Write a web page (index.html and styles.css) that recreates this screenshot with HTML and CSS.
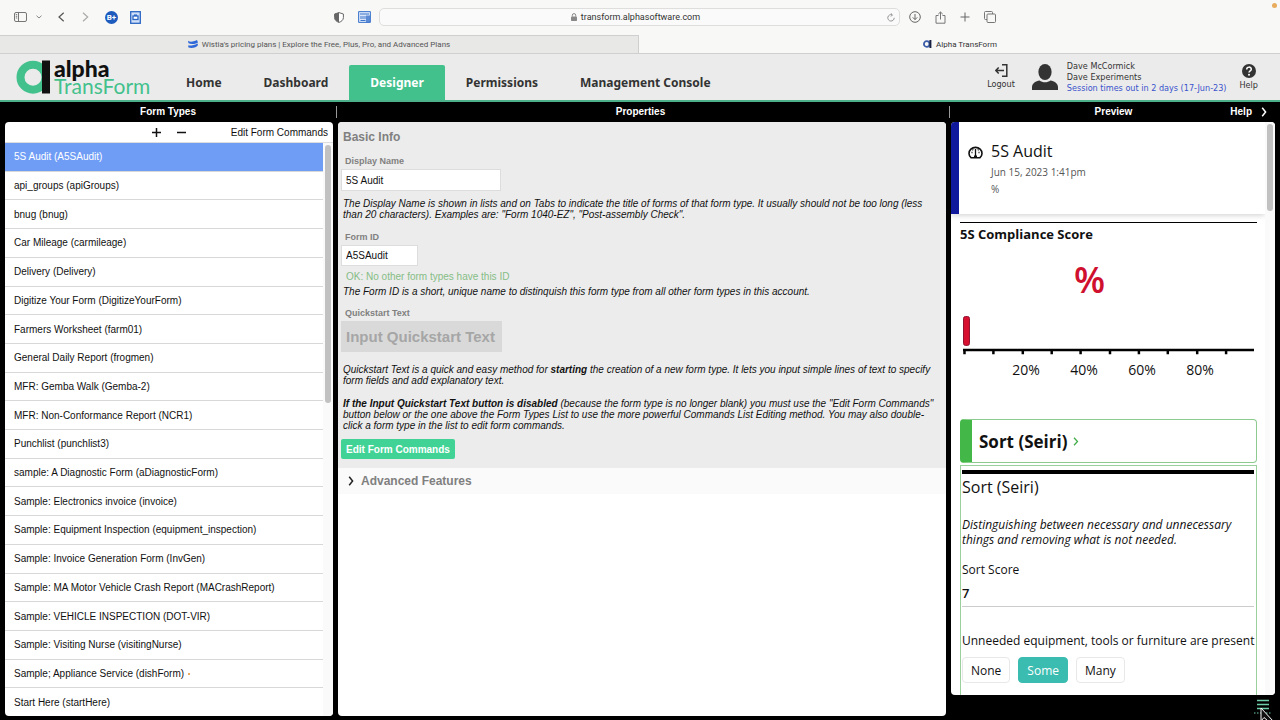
FILE: index.html
```html
<!DOCTYPE html>
<html lang="en">
<head>
<meta charset="utf-8">
<title>Alpha TransForm</title>
<link rel="stylesheet" href="styles.css">
</head>
<body>
<div class="browser-bar">
  <div class="bar-left">
    <button class="icon-btn" aria-label="Sidebar"><svg width="13" height="10" viewBox="0 0 13 10" fill="none" stroke="#777"><rect x=".5" y=".5" width="12" height="9" rx="1.5"/><path d="M4.5 .5v9M1.8 2.6h1.4M1.8 4.3h1.4M1.8 6h1.4"/></svg></button>
    <button class="icon-btn caret" aria-label="Tab groups"><svg width="6" height="4" viewBox="0 0 6 4" fill="none" stroke="#888"><path d="M.5 .7 3 3 5.500 .7"/></svg></button>
    <button class="icon-btn back" aria-label="Back"><svg width="7" height="10" viewBox="0 0 7 10" fill="none" stroke="#555" stroke-width="1.200"><path d="M5.700 .7 1 5l4.700 4.300"/></svg></button>
    <button class="icon-btn forward" aria-label="Forward"><svg width="7" height="10" viewBox="0 0 7 10" fill="none" stroke="#aaa" stroke-width="1.200"><path d="M1 .7 5.700 5 1 9.300"/></svg></button>
    <button class="icon-btn badge" aria-label="B plus">B+</button>
    <button class="icon-btn" aria-label="Capture"><svg width="11" height="13" viewBox="0 0 11 13" fill="none" stroke="#2b66c4"><rect x=".7" y=".7" width="9.600" height="11.600" fill="#cfe0f8" stroke-width="1.300"/><rect x="3" y="5" width="5" height="3.500" fill="#fff" stroke-width="1.300"/><path d="M4 4.200h3" stroke-width="1.500"/></svg></button>
  </div>
  <div class="bar-mid">
    <svg width="10" height="11" viewBox="0 0 10 11"><path d="M5 .6 9.400 2v3.600C9.400 8 7.500 9.500 5 10.400 2.500 9.500.6 8 .6 5.600V2z" fill="#fff" stroke="#666"/><path d="M5 .6v9.800C2.500 9.500.6 8 .6 5.600V2z" fill="#666"/></svg>
    <svg class="reader" width="13" height="12" viewBox="0 0 13 12" fill="none" stroke="#3d74cc"><path d="M.6 .6h11.800v10.800H.6z" fill="#d9e6f9"/><path d="M2 3h9M2.500 9.500h5M3 5v3M5 5v3M7 5v3" /><path d="M9 4.500v7M11 4.500v7" stroke-width="1.600"/></svg>
    <div class="address">
      <span class="address-text"><svg width="6" height="8" viewBox="0 0 6 8"><rect y="3.400" width="6" height="4.600" rx=".8" fill="#888"/><path d="M1.300 3.600V2.300a1.700 1.700 0 0 1 3.400 0v1.300" fill="none" stroke="#888"/></svg>transform.alphasoftware.com</span>
      <button class="icon-btn" aria-label="Reload"><svg width="8" height="9" viewBox="0 0 8 9" fill="none" stroke="#888" stroke-width=".9"><path d="M5 1.800a3.200 3.200 0 1 0 2.200 3M3.800 .3 5.500 1.900 3.900 3.500"/></svg></button>
    </div>
  </div>
  <div class="bar-right">
    <button class="icon-btn" aria-label="Downloads"><svg width="12" height="12" viewBox="0 0 12 12" fill="none" stroke="#666"><circle cx="6" cy="6" r="5.300"/><path d="M6 3v5.500M3.800 6.400 6 8.600l2.200-2.200"/></svg></button>
    <button class="icon-btn" aria-label="Share"><svg width="11" height="13" viewBox="0 0 11 13" fill="none" stroke="#777"><path d="M3.500 4.500H1v7.700h9V4.500H7.500M5.500 8.500V1M3.200 3.200 5.500 1l2.300 2.200"/></svg></button>
    <button class="icon-btn" aria-label="New tab"><svg width="10" height="10" viewBox="0 0 10 10" stroke="#666"><path d="M5 .5v9M.5 5h9"/></svg></button>
    <button class="icon-btn" aria-label="Tab overview"><svg width="12" height="12" viewBox="0 0 12 12" fill="none" stroke="#777"><path d="M3 8.500H1.500a1 1 0 0 1-1-1v-6a1 1 0 0 1 1-1h6a1 1 0 0 1 1 1V3"/><rect x="3" y="3" width="8.500" height="8.500" rx="1"/></svg></button>
  </div>
  <span class="record-dot"></span>
</div>
<div class="tabs">
  <a class="tab" href="#"><svg width="10" height="8" viewBox="0 0 10 8" fill="#2f68d8"><path d="M0 .8c2.500 1.600 5 1 9-.8L10 2.500C7 4.300 3 4.500 .5 3.300zM0 5.400c3 .6 6-.2 9.500-2L10 5c-1 2.500-6 3.500-9.500 2.600z"/></svg>Wistia's pricing plans | Explore the Free, Plus, Pro, and Advanced Plans</a>
  <a class="tab active" href="#"><svg width="9" height="8" viewBox="0 0 9 8"><circle cx="3.700" cy="4" r="2.800" fill="none" stroke="#3a5ca8" stroke-width="1.800"/><path d="M6.400 0h2v8h-2z" fill="#182142"/></svg>Alpha TransForm</a>
</div>
<header class="app-header">
  <a class="logo" href="#">
    <svg width="35" height="35" viewBox="0 0 35 35"><circle cx="17" cy="17.200" r="12.500" fill="none" stroke="#43c18d" stroke-width="8"/><path d="M26 .5h8v33h-8z" fill="#111"/></svg>
    <span class="logo-text"><span class="logo-alpha">alpha</span><span class="logo-transform">TransForm</span></span>
  </a>
  <nav class="nav">
    <a href="#">Home</a><a href="#">Dashboard</a><a href="#" class="current">Designer</a><a href="#">Permissions</a><a href="#">Management Console</a>
  </nav>
  <div class="account">
    <a class="action" href="#"><svg width="13" height="13" viewBox="0 0 13 13" fill="none" stroke="#333" stroke-width="1.500"><path d="M7 .8h4.800v11.400H7M.8 6.500H9M3.700 3.500l-2.900 3 2.900 3"/></svg>Logout</a>
    <svg width="26" height="26" viewBox="0 0 26 26" fill="#333"><ellipse cx="13" cy="8" rx="6.600" ry="8"/><path d="M0 26v-3c0-4 4-6 7.500-6.600 3 2.400 8 2.400 11 0C22 17 26 19 26 23v3z"/></svg>
    <div class="user"><span>Dave McCormick</span><span>Dave Experiments</span><a href="#">Session times out in 2 days (17-Jun-23)</a></div>
    <a class="action help" href="#"><svg width="14" height="14" viewBox="0 0 14 14"><circle cx="7" cy="7" r="7" fill="#333"/><path d="M4.700 5.400C4.700 2.400 9.300 2.400 9.300 5.200 9.300 6.800 7 6.900 7 8.600" fill="none" stroke="#fff" stroke-width="1.500"/><circle cx="7" cy="10.800" r="1" fill="#fff"/></svg>Help</a>
  </div>
</header>
<main class="workspace">
  <div class="titles">
    <h2>Form Types</h2>
    <h2 class="title-mid">Properties</h2>
    <div class="title-preview"><h2>Preview</h2><a href="#">Help<svg width="6" height="10" viewBox="0 0 6 10" fill="none" stroke="#fff" stroke-width="1.500"><path d="M1.200 .8 4.600 5 1.200 9.200"/></svg></a></div>
  </div>
  <div class="columns">
    <section class="panel forms">
      <div class="forms-tools">
        <button aria-label="Add"><svg width="9" height="9" viewBox="0 0 9 9" stroke="#111" stroke-width="1.500"><path d="M4.500 0v9M0 4.500h9"/></svg></button>
        <button aria-label="Remove"><svg width="9" height="9" viewBox="0 0 9 9" stroke="#111" stroke-width="1.500"><path d="M0 4.500h9"/></svg></button>
        <button class="edit-link">Edit Form Commands</button>
      </div>
      <div class="forms-body">
        <ul class="form-list">
          <li class="selected">5S Audit (A5SAudit)</li>
          <li>api_groups (apiGroups)</li>
          <li>bnug (bnug)</li>
          <li>Car Mileage (carmileage)</li>
          <li>Delivery (Delivery)</li>
          <li>Digitize Your Form (DigitizeYourForm)</li>
          <li>Farmers Worksheet (farm01)</li>
          <li>General Daily Report (frogmen)</li>
          <li>MFR: Gemba Walk (Gemba-2)</li>
          <li>MFR: Non-Conformance Report (NCR1)</li>
          <li>Punchlist (punchlist3)</li>
          <li>sample: A Diagnostic Form (aDiagnosticForm)</li>
          <li>Sample: Electronics invoice (invoice)</li>
          <li>Sample: Equipment Inspection (equipment_inspection)</li>
          <li>Sample: Invoice Generation Form (InvGen)</li>
          <li>Sample: MA Motor Vehicle Crash Report (MACrashReport)</li>
          <li>Sample: VEHICLE INSPECTION (DOT-VIR)</li>
          <li>Sample: Visiting Nurse (visitingNurse)</li>
          <li>Sample; Appliance Service (dishForm)<span class="dot"></span></li>
          <li>Start Here (startHere)</li>
        </ul>
        <div class="scroll"><div class="thumb thumb-forms"></div></div>
      </div>
    </section>
    <section class="panel properties">
      <div class="basic">
        <h3>Basic Info</h3>
        <label for="display-name">Display Name</label>
        <input id="display-name" type="text" value="5S Audit">
        <p class="name-help">The Display Name is shown in lists and on Tabs to indicate the title of forms of that form type. It usually should not be too long (less than 20 characters). Examples are: "Form 1040-EZ", "Post-assembly Check".</p>
        <label for="form-id">Form ID</label>
        <input id="form-id" class="short" type="text" value="A5SAudit">
        <div class="ok">OK: No other form types have this ID</div>
        <p class="id-help">The Form ID is a short, unique name to distinquish this form type from all other form types in this account.</p>
        <label for="quickstart">Quickstart Text</label>
        <button id="quickstart" class="quickstart" disabled>Input Quickstart Text</button>
        <p class="quick-help">Quickstart Text is a quick and easy method for <b>starting</b> the creation of a new form type. It lets you input simple lines of text to specify form fields and add explanatory text.</p>
        <p class="disabled-help"><b>If the Input Quickstart Text button is disabled</b> (because the form type is no longer blank) you must use the "Edit Form Commands" button below or the one above the Form Types List to use the more powerful Commands List Editing method. You may also double-click a form type in the list to edit form commands.</p>
        <button class="edit-commands">Edit Form Commands</button>
      </div>
      <button class="advanced"><svg width="6" height="10" viewBox="0 0 6 10" fill="none" stroke="#222" stroke-width="1.500"><path d="M1.200 .8 4.600 5 1.200 9.200"/></svg>Advanced Features</button>
    </section>
    <div class="preview-col">
      <section class="panel preview">
        <div class="preview-main">
          <div class="form-card">
            <svg width="15" height="14" viewBox="0 0 15 14" fill="none" stroke="#111"><path d="M3 12.700a6.500 6 0 1 1 9 0z" stroke-width="1.600"/><path d="M7.500 4v7M3.500 7.500h1M10.500 7.500h1M4.500 4.500l.7.700M10.500 4.500l-.7.700" stroke-width="1.300"/><path d="M6 10.500h3v2H6z" fill="#111" stroke="none"/></svg>
            <div><h3>5S Audit</h3><div class="meta">Jun 15, 2023 1:41pm</div><div class="meta">%</div></div>
          </div>
          <div class="form-body">
            <h4 class="score-title">5S Compliance Score</h4>
            <div class="score">%</div>
            <svg class="gauge" width="100%" height="40" viewBox="0 0 292 40" preserveAspectRatio="xMinYMin meet"><rect x=".5" y=".5" width="6" height="29" rx="2" fill="#d8102f" stroke="#8f1230"/><path d="M0 34h292M1.500 34v4.500M30.500 34v4.500M60 34v4.500M89 34v4.500M118 34v4.500M147.500 34v4.500M176.500 34v4.500M205.500 34v4.500M235 34v4.500M264 34v4.500" stroke="#000" stroke-width="2.500"/></svg>
            <div class="gauge-labels"><span>20%</span><span>40%</span><span>60%</span><span>80%</span></div>
            <button class="section-btn">Sort (Seiri)<svg width="6" height="9" viewBox="0 0 6 9" fill="none" stroke="#44ae4b" stroke-width="1.300"><path d="M1 .7 4.500 4.500 1 8.300"/></svg></button>
            <div class="section">
              <h3>Sort (Seiri)</h3>
              <p class="desc">Distinguishing between necessary and unnecessary things and removing what is not needed.</p>
              <div class="field-label">Sort Score</div>
              <div class="field-value">7</div>
              <div class="field-label question">Unneeded equipment, tools or furniture are present</div>
              <div class="choices"><button>None</button><button class="chosen">Some</button><button>Many</button></div>
            </div>
          </div>
        </div>
        <div class="scroll"><div class="thumb thumb-preview"></div></div>
      </section>
      <div class="footer"><button class="menu" aria-label="Menu"><svg width="18" height="20" viewBox="0 0 18 20"><path d="M3 5.500h12M3 9.500h12M3 13.500h12" stroke="#6fcfaa" stroke-width="1.500"/><path d="M0 18h18" stroke="#6fcfaa" stroke-dasharray="1.500 1.500"/></svg><svg class="pointer" width="13" height="14" viewBox="0 0 13 14"><path d="M1 1v13L4 10.500 8 14h5z" fill="#111" stroke="#fff"/></svg></button></div>
    </div>
  </div>
</main>
</body>
</html>
```

FILE: styles.css
```css
* { box-sizing: border-box; }
body { margin: 0; height: 100vh; display: flex; flex-direction: column; overflow: hidden; font-family: "Liberation Sans", Arial, sans-serif; font-size: 10px; color: #111; background: #000; }
button { font: inherit; color: inherit; background: none; border: 0; padding: 0; margin: 0; }
a { color: inherit; text-decoration: none; }
h2, h3, h4, p, ul { margin: 0; padding: 0; }
svg { display: block; flex: none; }

.browser-bar { position: relative; flex: none; height: 35px; display: flex; align-items: center; background: #f8f8f7; padding: 0 14px 1px; font-family: Roboto, sans-serif; }
.icon-btn { display: flex; align-items: center; justify-content: center; }
.bar-left { width: 320px; display: flex; align-items: center; }
.caret { margin-left: 9px; }
.back { margin-left: 16px; }
.forward { margin-left: 17px; }
.badge { width: 13px; height: 13px; border-radius: 50%; background: #1d5bbd; color: #fff; font-size: 8px; font-weight: 700; margin: 0 12px 0 16px; }
.bar-mid { flex: 1; display: flex; align-items: center; }
.reader { margin: 0 8px 0 14px; }
.address { flex: 1; height: 18px; display: flex; align-items: center; padding: 0 4px; border: 1px solid #dededd; border-radius: 5px; background: #fafafa; }
.address-text { flex: 1; display: flex; align-items: center; justify-content: center; gap: 4px; font-size: 9px; color: #333; }
.bar-right { width: 366px; padding-left: 9px; display: flex; align-items: center; gap: 14px; }
.record-dot { position: absolute; top: 3px; right: 3px; width: 5px; height: 5px; border-radius: 50%; background: #e8ac5c; }

.tabs { flex: none; height: 19px; display: flex; border-bottom: 1px solid #cfcfcf; font-family: Roboto, sans-serif; }
.tab { flex: 1; display: flex; align-items: center; justify-content: center; gap: 4px; font-size: 8px; padding-bottom: 1px; color: #555; background: #e8e8e7; border-top: 1px solid #cfcfcf; border-right: 1px solid #cfcfcf; }
.tab.active { background: #f8f8f7; color: #333; border-color: #f8f8f7; padding-left: 2px; }

.app-header { flex: none; height: 48px; display: flex; justify-content: space-between; background: #ebebeb; border-bottom: 2px solid #4cb08a; font-family: "DejaVu Sans Condensed", "DejaVu Sans", sans-serif; }
.logo { width: 151px; display: flex; align-items: center; gap: 3px; padding-left: 16px; }
.logo-text { display: flex; flex-direction: column; font-family: Lato, sans-serif; font-size: 21px; line-height: 17px; }
.logo-alpha { color: #111; font-size: 23px; font-weight: 900; }
.logo-transform { color: #43c18d; }
.nav { flex: 1; display: flex; align-items: flex-end; padding-left: 14px; font-family: "Noto Sans", sans-serif; font-size: 12px; font-weight: 700; color: #333; }
.nav a { height: 35px; line-height: 36px; padding: 0 21px; white-space: nowrap; }
.nav .current { background: #43c18d; color: #fff; border-radius: 2px 2px 0 0; }
.account { display: flex; align-items: center; font-size: 9px; color: #333; gap: 17px; padding-right: 22px; }
.action { display: flex; flex-direction: column; align-items: center; gap: 1px; line-height: 12px; }
.help { margin-left: -4px; }
.user { display: flex; flex-direction: column; line-height: 11px; margin-left: -8px; white-space: nowrap; }
.user a { color: #3a53cc; }

.workspace { flex: 1; min-height: 0; display: flex; flex-direction: column; background: #000; }
.titles { height: 20px; flex: none; display: grid; grid-template-columns: 336px 1fr 331px; align-items: center; color: #fff; font-weight: 700; }
.titles h2 { font-size: 10px; line-height: 12px; text-align: center; }
.titles .title-mid { border-left: 1px solid #999; padding-right: 5px; }
.title-preview { display: grid; grid-template-columns: 1fr auto 1fr; border-left: 1px solid #999; padding-right: 3px; line-height: 12px; }
.title-preview h2 { grid-column: 2; }
.title-preview a { display: flex; align-items: center; justify-content: flex-end; gap: 9px; padding-right: 10px; }
.columns { flex: 1; min-height: 0; display: grid; grid-template-columns: 328px 1fr 324px; gap: 5px; padding: 0 5px 4px; }
.panel { background: #fff; border-radius: 4px; overflow: hidden; min-height: 0; }
.scroll { flex: none; background: #fafafa; padding-top: 2px; }
.thumb { width: 6px; border-radius: 3px; background: #c1c1c1; margin: 0 auto; }
.thumb-forms { height: 258px; }
.thumb-preview { height: 87px; }

.forms { display: flex; flex-direction: column; }
.forms-tools { flex: none; height: 21px; display: flex; align-items: center; gap: 16px; padding: 0 5px 0 147px; border-bottom: 1px solid #ddd; }
.forms-tools .edit-link { margin-left: auto; }
.forms-body { flex: 1; min-height: 0; display: flex; }
.forms-body .scroll { width: 10px; }
.form-list { flex: 1; list-style: none; display: flex; flex-direction: column; }
.form-list li { flex: 1; display: flex; align-items: center; padding-left: 9px; border-bottom: 1px solid #d8d8d8; }
.form-list li:last-child { border-bottom: 0; }
.form-list .selected { background: #6f9df6; color: #fff; }
.dot { width: 2px; height: 2px; background: #e8ac5c; margin-left: 4px; }

.basic { background: #ececec; padding: 8px 3px 9px; display: flex; flex-direction: column; align-items: flex-start; }
.basic h3 { font-size: 12px; line-height: 15px; color: #808080; padding-left: 2px; margin-bottom: 10px; }
.basic label { font-size: 9px; font-weight: 700; line-height: 12px; color: #808080; padding-left: 4px; margin-bottom: 2px; }
.basic input { width: 160px; height: 22px; font: inherit; color: #111; border: 1px solid #ddd; background: #fff; padding: 0 4px; }
.basic .short { width: 77px; height: 21px; }
.basic p { font-style: italic; line-height: 11px; padding: 0 2px; }
.basic .name-help { margin: 7px 0 11px; }
.ok { color: #86bd86; line-height: 13px; padding-left: 5px; margin-top: 4px; }
.basic .id-help { margin: 3px 0 10px; }
.quickstart { background: #d9d9d9; color: #a6a6a6; font-size: 15px; font-weight: 700; height: 31px; padding: 0 7px 0 5px; }
.basic .quick-help { margin: 12px 0; }
.basic .disabled-help { margin-bottom: 8px; }
.edit-commands { background: #41d396; color: #fff; font-weight: 700; height: 20px; padding: 0 5px; border-radius: 2px; }
.advanced { display: flex; align-items: center; gap: 7px; width: 100%; height: 26px; padding-left: 10px; background: #fafafa; color: #808080; font-size: 12px; font-weight: 700; }

.preview-col { min-height: 0; display: flex; flex-direction: column; }
.preview { flex: 1; display: flex; font-family: "Open Sans", "Noto Sans", sans-serif; }
.preview .scroll { width: 10px; }
.preview-main { flex: 1; min-width: 0; overflow: hidden; }
.form-card { height: 92px; display: flex; gap: 8px; padding: 18px 0 0 9px; border-left: 8px solid #10189b; box-shadow: 0 1px 6px rgba(0, 0, 0, .2); }
.form-card > svg { margin-top: 5px; }
.form-card h3 { font-size: 16px; font-weight: 400; line-height: 22px; margin-bottom: 2px; }
.meta { font-size: 10px; line-height: 17px; color: #555; }
.form-body { padding: 8px 8px 0 9px; }
.score-title { border-top: 1px solid #000; font-size: 13px; line-height: 22px; }
.score { color: #d0102f; font-size: 36px; font-weight: 600; line-height: 40px; text-align: center; padding-right: 38px; margin-top: 15px; }
.gauge { padding: 0 3px; margin-top: 16px; }
.gauge-labels { display: grid; grid-template-columns: repeat(4, 58px); text-align: center; font-size: 14px; line-height: 18px; padding-left: 37px; margin-top: 5px; }
.section-btn { width: 100%; height: 44px; display: flex; align-items: center; gap: 6px; margin-top: 40px; padding-left: 7px; font-size: 17px; font-weight: 700; border: 1px solid #8dca8f; border-left: 12px solid #44b749; border-radius: 4px; }
.section { margin-top: 2px; padding: 4px 2px 0 1px; border: 1px solid #9ad09b; height: 260px; }
.section h3 { border-top: 4px solid #000; font-size: 16px; font-weight: 400; line-height: 26px; }
.desc { font-size: 12px; font-style: italic; line-height: 15px; margin-top: 17px; }
.field-label { font-size: 12px; line-height: 16px; margin-top: 15px; }
.field-value { font-size: 13px; font-weight: 600; line-height: 18px; padding: 6px 0 4px; border-bottom: 1px solid #ccc; }
.question { margin-top: 26px; white-space: nowrap; }
.choices { display: flex; gap: 8px; margin-top: 8px; font-size: 12px; }
.choices button { height: 26px; padding: 0 8px; border: 1px solid #e8e8e8; border-radius: 4px; }
.choices .chosen { background: #3bbcb0; color: #fff; border-color: #3bbcb0; }
.footer { height: 21px; flex: none; display: flex; justify-content: flex-end; padding-right: 3px; }
.menu { position: relative; height: 20px; }
.pointer { position: absolute; left: 6px; top: 12px; }
```
